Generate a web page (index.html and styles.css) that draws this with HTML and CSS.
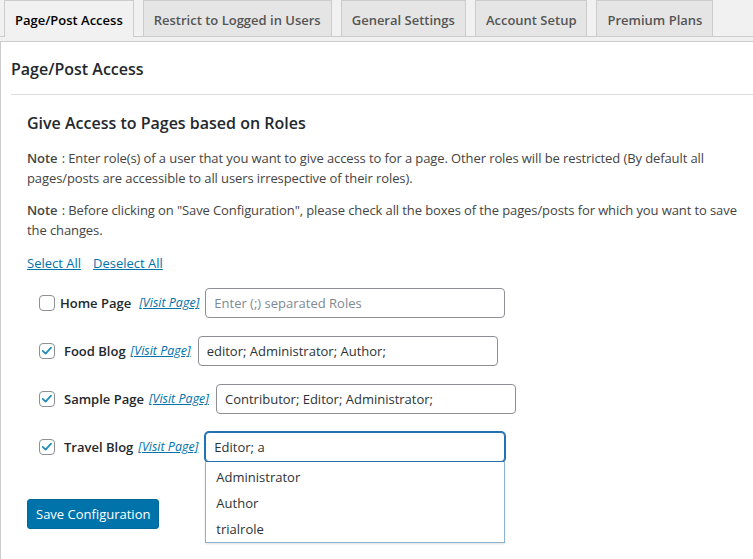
FILE: index.html
```html
<!DOCTYPE html>
<html lang="en">
<head>
<meta charset="utf-8">
<title>Page/Post Access</title>
<link rel="stylesheet" href="styles.css">
</head>
<body>
<div class="wrap">
  <nav class="tabs">
    <a class="tab is-active" href="#">Page/Post Access</a>
    <a class="tab" href="#">Restrict to Logged in Users</a>
    <a class="tab" href="#">General Settings</a>
    <a class="tab" href="#">Account Setup</a>
    <a class="tab" href="#">Premium Plans</a>
  </nav>
  <section class="panel">
    <h2 class="panel-title">Page/Post Access</h2>
    <div class="panel-body">
      <h3 class="section-title">Give Access to Pages based on Roles</h3>
      <p class="note"><b>Note</b> : Enter role(s) of a user that you want to give access to for a page. Other roles will be restricted (By default all pages/posts are accessible to all users irrespective of their roles).</p>
      <p class="note note-last"><b>Note</b> : Before clicking on "Save Configuration", please check all the boxes of the pages/posts for which you want to save the changes.</p>
      <div class="select-links"><a href="#">Select All</a><a href="#">Deselect All</a></div>
      <div class="rows">
        <div class="role-row row-first">
          <span class="cb"></span>
          <span class="page-name">Home Page</span>
          <a class="visit" href="#">[Visit Page]</a>
          <div class="field"><input class="roles" type="text" placeholder="Enter (;) separated Roles"></div>
        </div>
        <div class="role-row">
          <span class="cb"><svg viewBox="0 0 16 16"><path d="M3.2 7.9 L6.4 11 L12.6 4.2"/></svg></span>
          <span class="page-name">Food Blog</span>
          <a class="visit" href="#">[Visit Page]</a>
          <div class="field"><input class="roles" type="text" value="editor; Administrator; Author;"></div>
        </div>
        <div class="role-row">
          <span class="cb"><svg viewBox="0 0 16 16"><path d="M3.2 7.9 L6.4 11 L12.6 4.2"/></svg></span>
          <span class="page-name">Sample Page</span>
          <a class="visit" href="#">[Visit Page]</a>
          <div class="field"><input class="roles" type="text" value="Contributor; Editor; Administrator;"></div>
        </div>
        <div class="role-row">
          <span class="cb"><svg viewBox="0 0 16 16"><path d="M3.2 7.9 L6.4 11 L12.6 4.2"/></svg></span>
          <span class="page-name">Travel Blog</span>
          <a class="visit" href="#">[Visit Page]</a>
          <div class="field">
            <input class="roles is-focused" type="text" value="Editor; a">
            <ul class="suggest">
              <li>Administrator</li>
              <li>Author</li>
              <li>trialrole</li>
            </ul>
          </div>
        </div>
      </div>
      <button class="btn-primary" type="button">Save Configuration</button>
    </div>
  </section>
</div>
</body>
</html>
```

FILE: styles.css
```css
html, body {
  margin: 0;
  padding: 0;
}
body {
  background: #f1f1f1;
  font-family: "Open Sans", "Noto Sans", sans-serif;
  font-size: 13px;
  line-height: 20px;
  color: #444;
  overflow: hidden;
}
.wrap {
  width: 100%;
}
.tabs {
  display: flex;
  align-items: flex-start;
  gap: 9px;
  padding-left: 4px;
  border-bottom: 1px solid #ccc;
  height: 36px;
}
.tab {
  box-sizing: border-box;
  height: 36px;
  padding: 7px 10px 0;
  border: 1px solid #ccc;
  border-bottom: 0;
  background: #e5e5e5;
  color: #555;
  font-size: 13px;
  font-weight: 600;
  line-height: 24px;
  text-decoration: none;
  white-space: nowrap;
}
.tab.is-active {
  height: 37px;
  background: #f1f1f1;
  color: #000;
  position: relative;
  z-index: 1;
}
.panel {
  margin-top: 4px;
  background: #fff;
  border: 1px solid #ccc;
  border-right: 0;
  min-height: 560px;
}
.panel-title {
  margin: 0 0 0 10px;
  padding: 15px 0 13px;
  font-size: 16px;
  font-weight: 600;
  line-height: 24px;
  color: #23282d;
  border-bottom: 1px solid #ddd;
}
.panel-body {
  padding: 16px 0 0 26px;
  width: 716px;
}
.section-title {
  margin: 0 0 13px;
  font-size: 16px;
  font-weight: 600;
  line-height: 24px;
  color: #23282d;
}
.note {
  margin: 0 0 12px;
  letter-spacing: -0.1px;
}
.note b {
  font-weight: 600;
  margin-right: 1px;
}
.note-last {
  margin-bottom: 13px;
}
.select-links {
  display: flex;
  gap: 12px;
}
.select-links a {
  color: #0073aa;
  text-decoration: underline;
}
.rows {
  margin-top: 15px;
  padding-left: 12px;
  display: flex;
  flex-direction: column;
  gap: 18px;
}
.role-row {
  display: flex;
  align-items: center;
  height: 30px;
}
.cb {
  box-sizing: border-box;
  width: 16px;
  height: 16px;
  border: 1px solid #8c8f94;
  border-radius: 4px;
  background: #fff;
  margin-right: 9px;
  display: flex;
  flex: none;
}
.cb svg {
  width: 14px;
  height: 14px;
}
.cb path {
  fill: none;
  stroke: #1e8cbe;
  stroke-width: 2;
  stroke-linecap: round;
  stroke-linejoin: round;
}
.row-first .cb {
  margin-right: 5px;
}
.page-name {
  font-weight: 600;
  color: #23282d;
}
.visit {
  margin-left: 5px;
  font-size: 12.5px;
  font-style: italic;
  color: #0073aa;
  text-decoration: underline;
}
.row-first .visit {
  margin-left: 8px;
}
.field {
  position: relative;
  margin-left: 7px;
}
.row-first .field {
  margin-left: 6px;
}
.roles {
  box-sizing: border-box;
  width: 300px;
  height: 30px;
  margin: 0;
  padding: 0 8px;
  border: 1px solid #8c8f94;
  border-radius: 4px;
  background: #fff;
  font-family: inherit;
  font-size: 13px;
  color: #2c3338;
  outline: none;
}
.roles::placeholder {
  color: #7e8993;
}
.roles.is-focused {
  border-color: #2271b1;
  box-shadow: 0 0 0 1px #2271b1;
}
.suggest {
  position: absolute;
  left: 0;
  right: 0;
  top: 100%;
  margin: 0;
  padding: 2px 0 0;
  list-style: none;
  background: #fff;
  border: 1px solid #8fb3cf;
  border-top: 0;
  box-shadow: 0 1px 2px rgba(0, 0, 0, 0.12);
  z-index: 2;
}
.suggest li {
  height: 26px;
  line-height: 26px;
  padding: 0 10px;
  font-size: 13px;
  color: #2c3338;
}
.btn-primary {
  margin-top: 37px;
  height: 30px;
  padding: 0 8px;
  border: 1px solid #006799;
  border-radius: 3px;
  background: #0073aa;
  color: #fff;
  font-family: inherit;
  font-size: 13px;
  line-height: 28px;
}
```
